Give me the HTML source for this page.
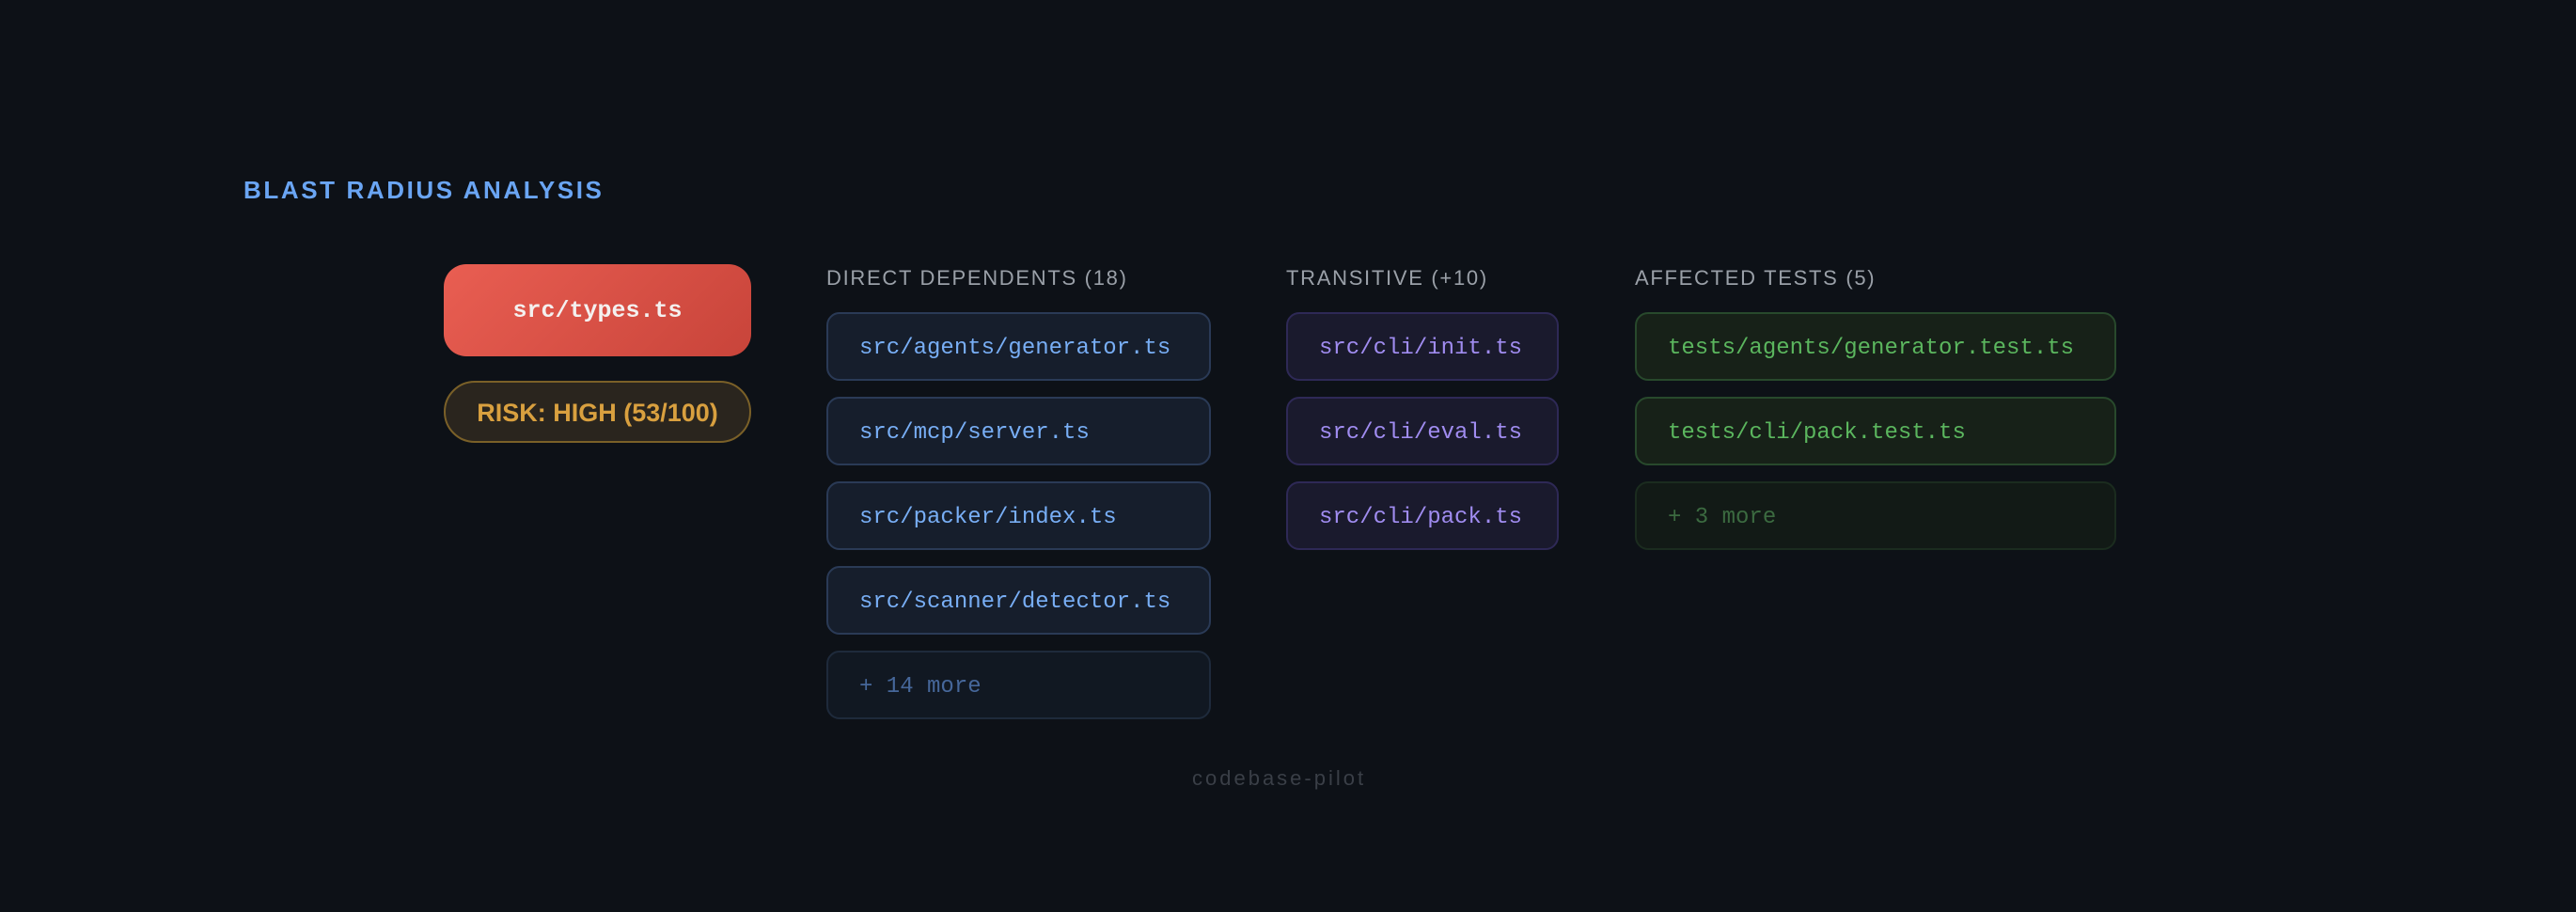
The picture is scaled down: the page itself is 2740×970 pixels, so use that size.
<!DOCTYPE html>
<html><head><meta charset="utf-8"><style>
*{margin:0;padding:0;box-sizing:border-box}
body{width:2740px;height:970px;background:#0d1117;position:relative;overflow:hidden;font-family:"Liberation Sans",sans-serif}
.a{position:absolute}
.h{left:259px;top:187px;font-size:26px;font-weight:bold;letter-spacing:2.6px;color:#6aa5f3}
.lbl{top:283px;font-size:22px;letter-spacing:1.7px;color:#9aa0a8}
.box{position:absolute;height:73px;border-radius:14px;border:2px solid;font-family:"Liberation Mono",monospace;font-size:24px;line-height:74px;padding-left:33px;white-space:nowrap}
.b{left:879px;width:409px;background:#161e2c;border-color:#2a3a56;color:#78aef5}
.bm{background:#111822;border-color:#1e2a3b;color:#46679a}
.p{left:1368px;width:290px;background:#1a1a2d;border-color:#2e2956;color:#a08cf0}
.g{left:1739px;width:512px;background:#172118;border-color:#28492c;color:#5bb65e}
.gm{background:#121a16;border-color:#1b2c1f;color:#3b6a40}
</style></head><body>
<div class="a h">BLAST RADIUS ANALYSIS</div>
<div class="a" style="left:472px;top:281px;width:327px;height:98px;border-radius:24px;background:linear-gradient(135deg,#e95e52,#c8443a);color:#f4f0ef;font-family:'Liberation Mono',monospace;font-weight:bold;font-size:25px;line-height:100px;text-align:center">src/types.ts</div>
<div class="a" style="left:472px;top:405px;width:327px;height:66px;border-radius:33px;background:#2a251e;border:2px solid #7a6028;color:#d9a03f;font-size:27px;font-weight:bold;line-height:64px;text-align:center">RISK: HIGH (53/100)</div>

<div class="a lbl" style="left:879px">DIRECT DEPENDENTS (18)</div>
<div class="a lbl" style="left:1368px">TRANSITIVE (+10)</div>
<div class="a lbl" style="left:1739px">AFFECTED TESTS (5)</div>

<div class="box b" style="top:332px">src/agents/generator.ts</div>
<div class="box b" style="top:422px">src/mcp/server.ts</div>
<div class="box b" style="top:512px">src/packer/index.ts</div>
<div class="box b" style="top:602px">src/scanner/detector.ts</div>
<div class="box b bm" style="top:692px">+ 14 more</div>

<div class="box p" style="top:332px">src/cli/init.ts</div>
<div class="box p" style="top:422px">src/cli/eval.ts</div>
<div class="box p" style="top:512px">src/cli/pack.ts</div>

<div class="box g" style="top:332px">tests/agents/generator.test.ts</div>
<div class="box g" style="top:422px">tests/cli/pack.test.ts</div>
<div class="box g gm" style="top:512px">+ 3 more</div>

<div class="a" style="left:1268px;top:815px;font-size:22px;letter-spacing:3px;color:#3a3f47">codebase-pilot</div>
</body></html>
